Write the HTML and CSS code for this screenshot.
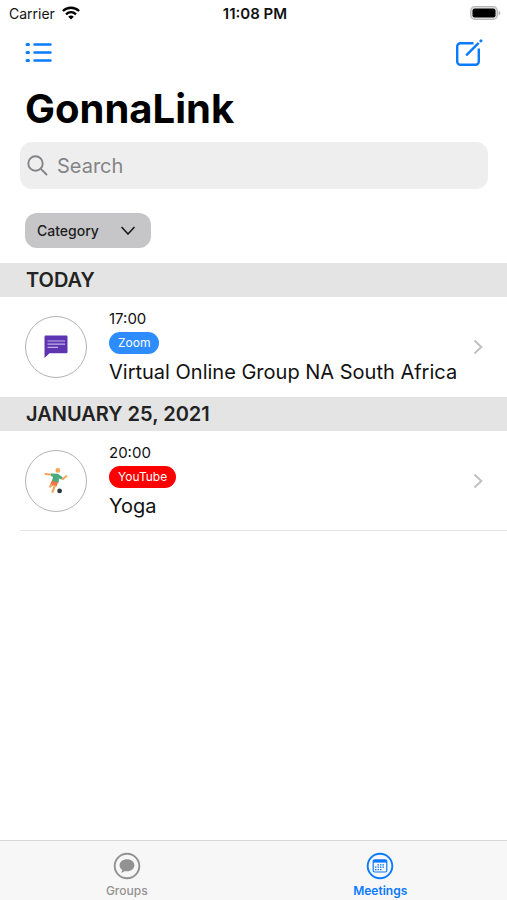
FILE: index.html
```html
<!DOCTYPE html>
<html lang="en">
<head>
<meta charset="utf-8">
<meta name="viewport" content="width=device-width, initial-scale=1">
<title>GonnaLink</title>
<link rel="stylesheet" href="styles.css">
</head>
<body>
<div class="app">
  <div class="status">
    <div class="carrier">
      <span>Carrier</span>
      <svg width="18" height="14" viewBox="0 0 18 14" aria-hidden="true">
        <g fill="none" stroke="#000" stroke-width="2.4">
          <path d="M.9 5C5.5.6 12.5.6 17.1 5"/>
          <path d="M4 8.3c3-2.7 7-2.7 10 0"/>
        </g>
        <path d="M9 13.5 6.200 10.700c1.700-1.500 3.900-1.500 5.600 0z"/>
      </svg>
    </div>
    <span class="clock">11:08 PM</span>
    <svg class="battery" width="31" height="14" viewBox="0 0 31 14" aria-hidden="true">
      <rect x=".7" y=".7" width="26.6" height="12.6" rx="4" fill="#e4e4e4" stroke="#b8b8b8" stroke-width="1.3"/>
      <rect x="2.5" y="2.5" width="23" height="9" rx="2" fill="#000"/>
      <path d="M28.600 4.700c2.200.6 2.200 4 0 4.600z" fill="#b0b0b0"/>
    </svg>
  </div>
  <header class="toolbar">
    <button class="icon-button" type="button" aria-label="List">
      <svg width="28" height="22" viewBox="0 0 28 22" fill="none" stroke="#0a7aff" stroke-width="2.4" stroke-linecap="round">
        <path d="M10.500 2.500h16M10.500 10.500h16M10.500 18.500h16"/>
        <path stroke-width="3" d="M3 2.500h1.500M3 10.500h1.500M3 18.500h1.500"/>
      </svg>
    </button>
    <button class="icon-button" type="button" aria-label="New meeting">
      <svg width="28" height="28" viewBox="0 0 28 28" fill="none" stroke="#0a7aff" stroke-width="2.4" stroke-linecap="round">
        <path stroke-linecap="butt" d="M18.500 4.200H5.500a3.300 3.300 0 0 0-3.300 3.300V22.500a3.300 3.300 0 0 0 3.300 3.300h15a3.300 3.300 0 0 0 3.300-3.300V9.500"/>
        <path stroke-linecap="butt" d="M11.200 16.400 23.700 3.900"/>
        <path stroke-width="2.8" d="m25.800 2 .2-.2"/>
      </svg>
    </button>
  </header>
  <main class="content">
    <h1 class="title">GonnaLink</h1>
    <label class="search">
      <svg width="21" height="21" viewBox="0 0 21 21" fill="none" stroke="#848488" stroke-width="1.9" stroke-linecap="round" aria-hidden="true">
        <circle cx="8.5" cy="8.5" r="7.2"/><path d="m13.800 13.800 5.700 5.700"/>
      </svg>
      <input type="search" placeholder="Search" aria-label="Search">
    </label>
    <button class="category" type="button">
      <span>Category</span>
      <svg width="16" height="10" viewBox="0 0 16 10" fill="none" stroke="#1c1c1e" stroke-width="1.7" stroke-linecap="round" stroke-linejoin="round" aria-hidden="true"><path d="M2 1.500 8 8l6-6.500"/></svg>
    </button>
    <section>
      <h2 class="day">TODAY</h2>
      <a class="meeting" href="#today">
        <span class="avatar">
          <svg width="24" height="24" viewBox="0 0 24 24" aria-hidden="true">
            <path fill="#5e35b1" d="M1.700.5h20.600a1.200 1.200 0 0 1 1.200 1.200V17a1.200 1.200 0 0 1-1.200 1.200H5.500L.5 23V1.700A1.200 1.200 0 0 1 1.700.5z"/>
            <path stroke="#c3b0e8" stroke-width="1.2" d="M3.500 6h17.500M3.500 9.200h17.500M3.500 12.400h10.500"/>
          </svg>
        </span>
        <span class="details">
          <span class="time">17:00</span>
          <span class="badge zoom">Zoom</span>
          <span class="name">Virtual Online Group NA South Africa</span>
        </span>
        <svg class="chevron" width="10" height="16" viewBox="0 0 10 16" aria-hidden="true"><path d="m1.500 1.500 6.800 6.500-6.800 6.500"/></svg>
      </a>
    </section>
    <section>
      <h2 class="day">JANUARY 25, 2021</h2>
      <a class="meeting" href="#january-25">
        <span class="avatar">
          <svg width="26" height="28" viewBox="0 0 26 28" fill="none" aria-hidden="true">
            <path stroke="#f5a55a" stroke-width="1.9" stroke-linecap="round" d="M9 7.700 2.500 7M17.500 10.500l2.500 1.500 3.500-3"/>
            <circle cx="14.8" cy="3.4" r="2.4" fill="#f5a55a"/>
            <path fill="#48ab80" d="m8 6.500 7 .2 4.500 3.500-1 2.200-2.600-1-.2 4.400-6.900-1.500 1.200-4.300-2-1z"/>
            <path stroke="#f0713f" stroke-width="3.2" d="m10.500 14-2 4.500M13.600 15l-1.600 4"/>
            <path stroke="#f5a55a" stroke-width="2.2" stroke-linecap="round" d="M8.300 18 7.200 19.500M11.700 19 9.500 24.800"/>
            <circle cx="16.6" cy="23.9" r="2.4" fill="#2d3940"/>
          </svg>
        </span>
        <span class="details">
          <span class="time">20:00</span>
          <span class="badge youtube">YouTube</span>
          <span class="name">Yoga</span>
        </span>
        <svg class="chevron" width="10" height="16" viewBox="0 0 10 16" aria-hidden="true"><path d="m1.500 1.500 6.800 6.500-6.800 6.500"/></svg>
      </a>
      <hr class="divider">
    </section>
  </main>
  <nav class="tabs">
    <a class="tab" href="#groups">
      <svg width="28" height="28" viewBox="0 0 28 28" aria-hidden="true">
        <circle cx="14" cy="14" r="12.3" fill="none" stroke="#929292" stroke-width="1.9"/>
        <path fill="#929292" d="M14 7.200c-4.200 0-7.400 2.600-7.400 6 0 2 1 3.700 2.700 4.800-.1 1-.7 1.900-1.300 2.600 1.700-.1 3-.8 4-1.600.6.100 1.300.2 2 .2 4.200 0 7.400-2.600 7.400-6s-3.200-6-7.400-6z"/>
      </svg>
      <span>Groups</span>
    </a>
    <a class="tab active" href="#meetings" aria-current="page">
      <svg width="28" height="28" viewBox="0 0 28 28" fill="none" stroke="#0a7aff" aria-hidden="true">
        <circle cx="14" cy="14" r="12.3" stroke-width="1.9"/>
        <rect x="7.2" y="7.8" width="13.6" height="12.2" rx="1.5" stroke-width="1.2"/>
        <path stroke-width="2.6" d="M7.200 9.300h13.600"/>
        <path stroke-width="1.3" stroke-dasharray="1.5 1" d="M11.500 12.800h7.500M9 15.200h10M9 17.600h7.500"/>
      </svg>
      <span>Meetings</span>
    </a>
  </nav>
</div>
</body>
</html>
```
FILE: styles.css
```css
* {
  box-sizing: border-box;
}

body {
  margin: 0;
  background: #fff;
  color: #111;
  font-family: Inter, "Liberation Sans", sans-serif;
}

button {
  border: 0;
  font: inherit;
  color: inherit;
  cursor: pointer;
}

a {
  color: inherit;
  text-decoration: none;
}

svg {
  display: block;
  flex: none;
}

.app {
  display: flex;
  flex-direction: column;
  min-height: 100vh;
}

.status {
  display: grid;
  grid-template-columns: 1fr auto 1fr;
  align-items: center;
  height: 26px;
  padding: 0 6px 0 9px;
  font-size: 14px;
}

.carrier {
  display: flex;
  align-items: center;
  gap: 7px;
}

.clock {
  font-size: 15px;
  font-weight: 600;
}

.battery {
  justify-self: end;
}

.toolbar {
  display: flex;
  justify-content: space-between;
  align-items: center;
  height: 54px;
  padding: 0 24px;
}

.icon-button {
  padding: 0;
  background: none;
}

.content {
  flex: 1;
}

.title {
  margin: 5px 25px 9px;
  font-size: 40px;
  line-height: 48px;
  font-weight: 700;
  color: #000;
}

.search {
  display: flex;
  align-items: center;
  gap: 9px;
  height: 47px;
  margin: 0 19px 24px 20px;
  padding: 0 7px;
  border-radius: 12px;
  background: #eee;
}

.search input {
  flex: 1;
  min-width: 0;
  padding: 0;
  border: 0;
  outline: 0;
  background: none;
  font: inherit;
  font-size: 20px;
}

.search input::placeholder {
  color: #848488;
  opacity: 1;
}

.category {
  display: flex;
  align-items: center;
  gap: 21px;
  height: 35px;
  margin: 0 25px 15px;
  padding: 0 15px 0 12px;
  border-radius: 12px;
  background: #c6c6c8;
  font-size: 14px;
  font-weight: 500;
  color: #1c1c1e;
}

.day {
  margin: 0;
  padding: 0 26px;
  background: #e4e4e4;
  font-size: 20px;
  line-height: 34px;
  font-weight: 600;
  color: #222;
}

.meeting {
  display: flex;
  align-items: center;
  gap: 22px;
  height: 100px;
  padding: 0 24px 0 25px;
}

.avatar {
  display: flex;
  flex: none;
  align-items: center;
  justify-content: center;
  width: 62px;
  height: 62px;
  border: 1px solid #b4b4b4;
  border-radius: 50%;
}

.details {
  display: flex;
  flex: 1;
  flex-direction: column;
  align-items: flex-start;
  min-width: 0;
}

.time {
  font-size: 15px;
  line-height: 20px;
}

.badge {
  margin: 3px 0 5px;
  padding: 0 9px;
  border-radius: 11px;
  font-size: 12px;
  line-height: 22px;
  color: #fff;
}

.zoom {
  background: #2d8cff;
}

.youtube {
  background: #f00;
}

.name {
  font-size: 20px;
  line-height: 26px;
  white-space: nowrap;
}

.chevron {
  fill: none;
  stroke: #c0c0c2;
  stroke-width: 2;
}

.divider {
  height: 1px;
  margin: -1px 0 0 20px;
  border: 0;
  background: #e6e6e6;
}

.tabs {
  display: grid;
  grid-template-columns: 1fr 1fr;
  border-top: 1px solid #d8d8d8;
  background: #f7f7f7;
}

.tab {
  display: flex;
  flex-direction: column;
  align-items: center;
  gap: 3px;
  padding: 11px 0 1px;
  font-size: 12px;
  line-height: 16px;
  font-weight: 500;
  color: #929292;
}

.active {
  font-weight: 600;
  color: #0a7aff;
}
```
